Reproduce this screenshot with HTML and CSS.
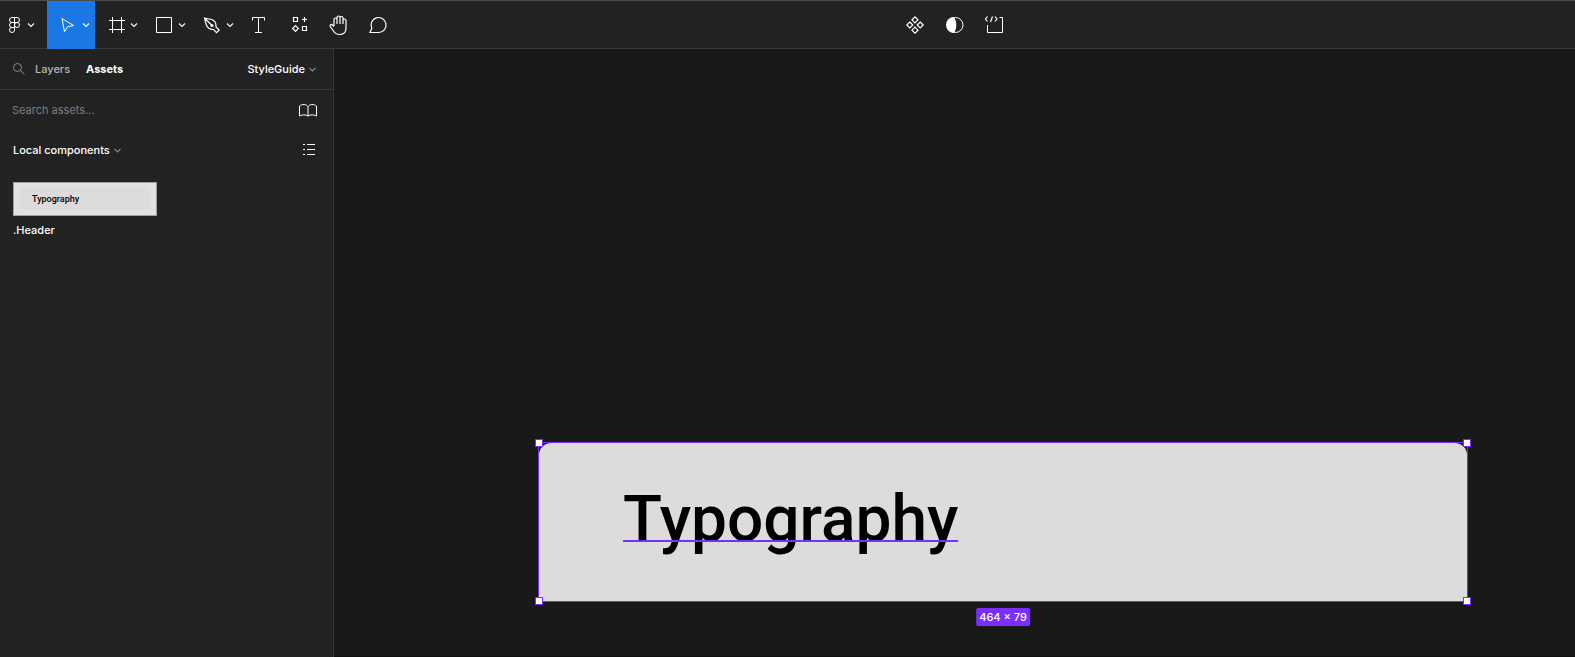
FILE: index.html
```
<!DOCTYPE html>
<html lang="en">
<head>
<meta charset="utf-8">
<title>StyleGuide</title>
<link rel="stylesheet" href="styles.css">
</head>
<body>
<div class="app">
  <header class="toolbar">
    <nav class="tools" aria-label="Tools">
      <button class="tool tool-wide menu" aria-label="Main menu">
        <svg viewBox="0 0 47 48" width="47" height="48"><path d="M14.5 16.500h-2.500a2.500 2.500 0 0 0 0 5h2.500zM14.500 16.500h2.500a2.500 2.500 0 0 1 0 5h-2.500zM14.500 21.500h-2.500a2.500 2.500 0 0 0 0 5h2.500zM14.500 26.500h-2.500a2.500 2.500 0 1 0 2.500 2.500z"/><circle cx="17" cy="24" r="2.500"/><path class="chev" d="M28 22.500l3 3 3-3"/></svg>
      </button>
      <button class="tool tool-wide active" aria-label="Move">
        <svg viewBox="0 0 48 48" width="48" height="48"><path d="M15 17.500l11.500 7-5.800 1.200-3.200 5z"/><path class="chev" d="M36 22.500l3 3 3-3"/></svg>
      </button>
      <button class="tool tool-wide" aria-label="Frame">
        <svg viewBox="0 0 48 48" width="48" height="48"><path d="M17.500 16v16M26.500 16v16M14 19.500h16M14 28.500h16"/><path class="chev" d="M36 22.500l3 3 3-3"/></svg>
      </button>
      <button class="tool tool-wide" aria-label="Rectangle">
        <svg viewBox="0 0 48 48" width="48" height="48"><path d="M13.500 16.500h15v15h-15z"/><path class="chev" d="M36 22.500l3 3 3-3"/></svg>
      </button>
      <button class="tool tool-wide" aria-label="Pen">
        <svg viewBox="0 0 48 48" width="48" height="48"><path class="heavy" d="M13.500 17l7 1.500c3 .8 4.800 3.500 4.500 7.500l3.200 3-2.700 2.700-2.800-3.200c-4 .2-6.400-1.500-7.400-4.700zM13.500 17l7 7"/><circle class="solid" cx="21" cy="24.500" r="1.500"/><path class="chev" d="M36 22.500l3 3 3-3"/></svg>
      </button>
      <button class="tool" aria-label="Text">
        <svg viewBox="0 0 40 48" width="40" height="48"><path d="M13.500 19.500v-3h12v3M19.500 16.500v15M16 31.500h7"/></svg>
      </button>
      <button class="tool" aria-label="Resources">
        <svg viewBox="0 0 40 48" width="40" height="48"><path class="heavy" d="M14.500 16.500h4v4h-4zM23.500 25.500h4v4h-4zM25.500 16v5M23 18.500h5M16.500 24.600l2.900 2.900-2.900 2.900-2.900-2.900z"/></svg>
      </button>
      <button class="tool" aria-label="Hand">
        <svg viewBox="0 0 40 48" width="40" height="48"><path class="heavy" d="M15 25v-6.500a1.500 1.500 0 0 1 3 0v4.500M18 18v-1.500a1.500 1.500 0 0 1 3 0v6.500M21 17a1.500 1.500 0 0 1 3 0v6M24 19.500a1.500 1.500 0 0 1 3 0v7.500c0 4-2.500 6.500-6.500 6.500-3 0-4.500-1-6-3.500l-3.200-4.500c-1-1.600 1-2.800 2.200-1.500l1.500 1.500"/></svg>
      </button>
      <button class="tool" aria-label="Comment">
        <svg viewBox="0 0 40 48" width="40" height="48"><path class="heavy" d="M11 31.500l1.800-4.200a7.500 7.500 0 1 1 7.200 4.200z"/></svg>
      </button>
    </nav>
    <nav class="tools tools-center" aria-label="Selection actions">
      <button class="tool" aria-label="Create component">
        <svg viewBox="0 0 40 48" width="40" height="48"><path class="heavy" d="M20 15.800l3 3-3 3-3-3zM20 26.200l3 3-3 3-3-3zM14.800 21l3 3-3 3-3-3zM25.200 21l3 3-3 3-3-3z"/></svg>
      </button>
      <button class="tool" aria-label="Use as mask">
        <svg viewBox="0 0 40 48" width="40" height="48"><circle cx="20.500" cy="24" r="7.500"/><path class="solid" d="M19 16a8 8 0 0 0 0 16c3-4.500 3-11.500 0-16z"/></svg>
      </button>
      <button class="tool" aria-label="Dev mode">
        <svg viewBox="0 0 40 48" width="40" height="48"><path d="M12.500 24v7.500h15v-15h-3"/><path class="heavy" d="M12.500 15.500l-2 2.500 2 2.500M17.500 15.500l-2 5.500M20 15.500l2 2.500-2 2.500"/></svg>
      </button>
    </nav>
  </header>

  <div class="workspace">
    <aside class="sidebar">
      <div class="tabs">
        <svg class="search-icon" viewBox="0 0 12 12" width="12" height="12"><circle cx="4.500" cy="4.500" r="4"/><path d="M7.500 7.500l4 4"/></svg>
        <button class="tab">Layers</button>
        <button class="tab current">Assets</button>
        <button class="page-picker">StyleGuide <svg viewBox="0 0 7 5" width="7" height="5"><path d="M.5 .8l3 3 3-3"/></svg></button>
      </div>
      <div class="row">
        <input class="search" type="text" placeholder="Search assets..." aria-label="Search assets">
        <button class="icon-button" aria-label="Libraries"><svg viewBox="0 0 18 13" width="18" height="13"><path d="M9 2.500c-1.500-2.300-6-2.700-8.500-.5v10c2-1.500 6.500-1.500 8.500 0 2-1.500 6.500-1.500 8.500 0v-10c-2.500-2.200-7-1.800-8.500.5zM9 2.500v9.500"/></svg></button>
      </div>
      <div class="row">
        <button class="section">Local components <svg viewBox="0 0 7 5" width="7" height="5"><path d="M.5 .8l3 3 3-3"/></svg></button>
        <button class="icon-button" aria-label="Show as list"><svg class="list" viewBox="0 0 14 12" width="14" height="12"><path d="M1 .5h2M5 .5h8M1 5.500h2M5 5.500h8M1 10.500h2M5 10.500h8"/></svg></button>
      </div>
      <figure class="asset">
        <div class="thumb"><div class="thumb-frame">Typography</div></div>
        <figcaption>.Header</figcaption>
      </figure>
    </aside>

    <main class="canvas">
      <section class="selection">
        <div class="artboard"><span class="headline">Typography</span></div>
        <i class="handle nw"></i><i class="handle ne"></i><i class="handle sw"></i><i class="handle se"></i>
        <span class="size">464 × 79</span>
      </section>
    </main>
  </div>
</div>
</body>
</html>
```
FILE: styles.css
```
* { box-sizing: border-box; }
body {
  margin: 0;
  background: #181818;
  color: #fff;
  font: 500 11px/16px Inter, "Liberation Sans", sans-serif;
}
button {
  margin: 0;
  padding: 0;
  border: 0;
  background: none;
  color: inherit;
  font: inherit;
}
svg {
  display: block;
  flex: none;
  fill: none;
  stroke: currentColor;
}
.app {
  display: flex;
  flex-direction: column;
  min-height: 100vh;
}

.toolbar {
  display: flex;
  border-top: 1px solid #4b4b4f;
  background: #222;
  box-shadow: inset 0 -1px #383838;
}
.tools { display: flex; }
.tools-center { margin-left: 496px; }
.tool { width: 40px; height: 48px; }
.tool-wide { width: 48px; }
.menu { width: 47px; }
.active { background: #1a78e6; }
.chev { stroke-width: 1.1; }
.heavy { stroke-width: 1.2; }
.solid { fill: currentColor; stroke: none; }

.workspace {
  display: flex;
  flex: 1;
}
.sidebar {
  width: 334px;
  flex: none;
  border-right: 1px solid #383838;
  background: #222;
}
.tabs {
  display: flex;
  align-items: center;
  height: 41px;
  padding: 0 17px 0 13px;
  border-bottom: 1px solid #383838;
}
.search-icon { color: #8a8a8a; }
.tab {
  margin-left: 10px;
  color: #b8b8b8;
}
.tab.current {
  margin-left: 16px;
  color: #fff;
  font-weight: 700;
}
.page-picker {
  display: flex;
  align-items: center;
  gap: 4px;
  margin-left: auto;
}
.page-picker svg, .section svg {
  color: #8a8a8a;
  stroke-width: 1.2;
}
.row {
  display: flex;
  align-items: center;
  justify-content: space-between;
  height: 40px;
  padding: 0 16px 0 12px;
}
.search {
  flex: 1;
  min-width: 0;
  padding: 0;
  border: 0;
  outline: 0;
  background: none;
  color: #fff;
  font: inherit;
  font-weight: 400;
}
.search::placeholder { color: #7e7e7e; opacity: 1; }
.section {
  display: flex;
  align-items: center;
  gap: 4px;
  padding-left: 1px;
}
.list { margin-right: 1px; }
.asset {
  width: 144px;
  margin: 12px 0 0 13px;
}
.thumb {
  padding: 5px 6px;
  border: 1px solid #a0a0a0;
  background: #e1e1e1;
}
.thumb-frame {
  height: 22px;
  padding-left: 12px;
  background: #dddbdc;
  color: #000;
  font: 500 9px/22px Roboto, sans-serif;
}
.asset figcaption { margin-top: 6px; }

.canvas {
  position: relative;
  flex: 1;
  border-bottom: 1px solid #101010;
}
.selection {
  position: absolute;
  left: 204px;
  top: 393px;
  border: 1px solid #7b2fff;
}
.artboard {
  width: 928px;
  padding: 40px 84px 44px;
  border-radius: 12px 12px 0 0;
  background: #dddbdc;
  color: #000;
  font: 500 64px/74px Roboto, sans-serif;
}
.headline {
  display: inline-block;
  position: relative;
}
.headline::after {
  content: "";
  position: absolute;
  left: 0;
  right: 0;
  top: 57px;
  height: 2px;
  background: #7b2fff;
}
.handle {
  position: absolute;
  width: 8px;
  height: 8px;
  border: 1px solid #7b2fff;
  background: #fff;
}
.nw { left: -4px; top: -4px; }
.ne { right: -4px; top: -4px; }
.sw { left: -4px; bottom: -4px; }
.se { right: -4px; bottom: -4px; }
.size {
  position: absolute;
  top: 100%;
  left: 50%;
  margin-top: 7px;
  padding: 1px 3px;
  border-radius: 2px;
  background: #7b2fff;
  transform: translateX(-50%);
  white-space: nowrap;
}
```
